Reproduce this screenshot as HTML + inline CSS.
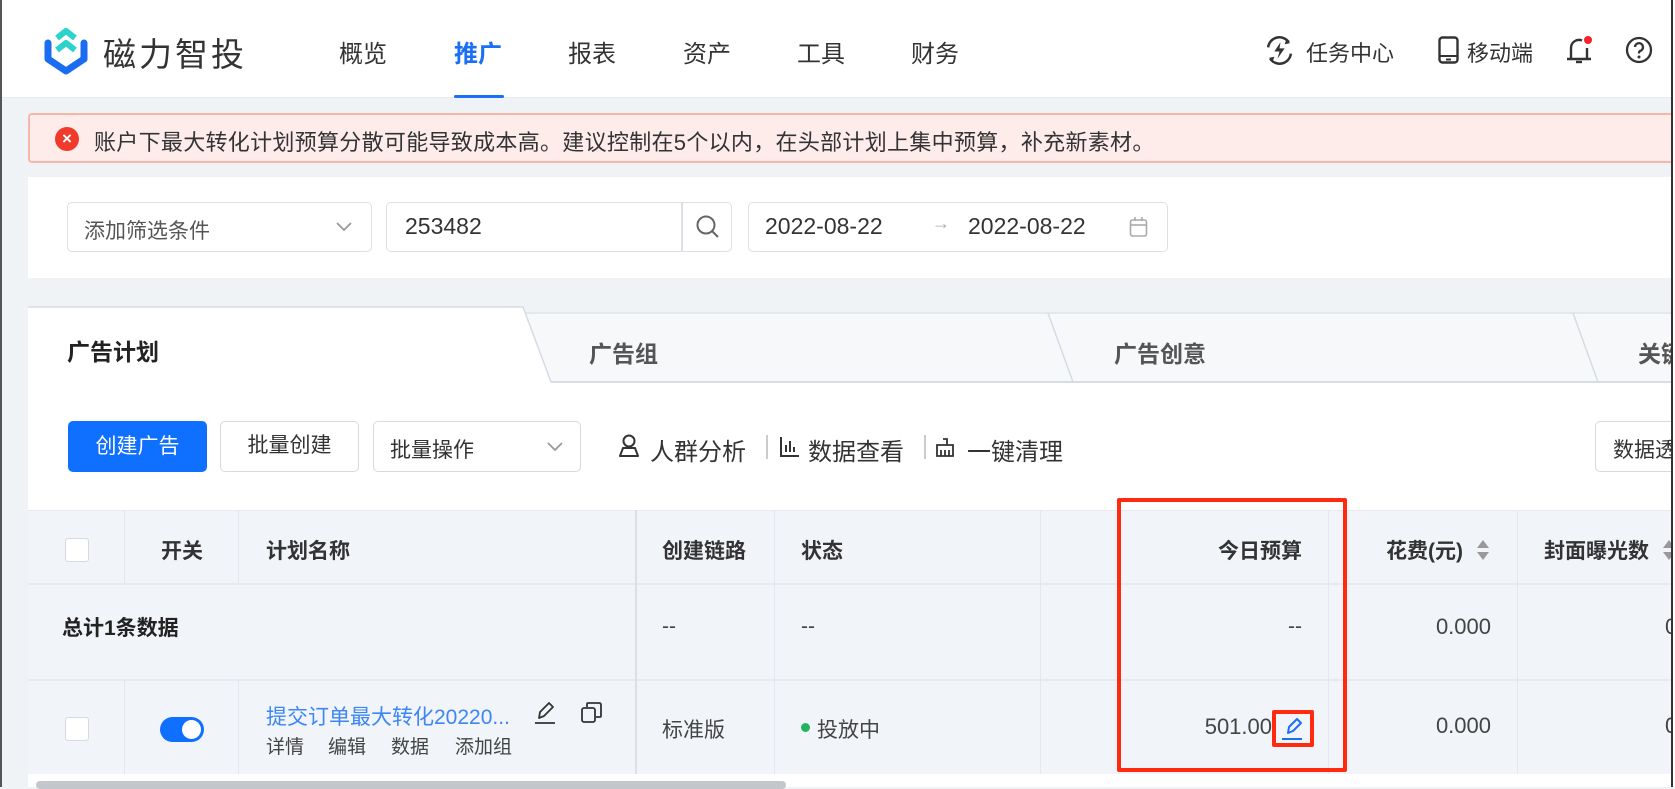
<!DOCTYPE html>
<html><head><meta charset="utf-8"><style>
*{margin:0;padding:0;box-sizing:border-box}
body{width:1675px;height:787px;overflow:hidden;background:#f0f3f6;font-family:"Liberation Sans","Noto Sans CJK SC",sans-serif;color:#333;position:relative}
.a{position:absolute;white-space:nowrap}
.nav{font-size:24px;color:#333;top:34px}
.hd{font-size:21px;color:#333;font-weight:bold}
.td{font-size:21px;color:#444}
.vl{position:absolute;width:1px;background:#e4e8ee}
</style></head><body>
<div class="a" style="left:0;top:0;width:1675px;height:98px;background:#fff;border-bottom:1px solid #e8ebf0"></div>
<svg class="a" style="left:40px;top:26px" width="52" height="50" viewBox="0 0 52 50">
<path d="M8 17 L8 33 L26 45 L44 33 L44 17" fill="none" stroke="#1a6cf0" stroke-width="7" stroke-linejoin="round" stroke-linecap="round"/>
<path d="M17 12 L26 5 L35 12" fill="none" stroke="#2cd3c9" stroke-width="6" stroke-linejoin="round"/>
<path d="M17 24 L26 17 L35 24" fill="none" stroke="#2cd3c9" stroke-width="6" stroke-linejoin="round"/>
</svg>
<div class="a" style="left:103px;top:28px;font-size:33px;color:#333;letter-spacing:3px">磁力智投</div>
<div class="a nav" style="left:339px">概览</div>
<div class="a nav" style="left:454px;color:#1a6ff5;font-weight:bold">推广</div>
<div class="a" style="left:454px;top:95px;width:50px;height:3px;background:#1a6ff5;border-radius:2px"></div>
<div class="a nav" style="left:568px">报表</div>
<div class="a nav" style="left:683px">资产</div>
<div class="a nav" style="left:797px">工具</div>
<div class="a nav" style="left:911px">财务</div>
<svg class="a" style="left:1264px;top:35px" width="31" height="31" viewBox="0 0 30 30"><path d="M4 12 A11 11 0 0 1 24 7 M26 18 A11 11 0 0 1 6 23" fill="none" stroke="#333" stroke-width="2.4"/><path d="M22 3 L25 8 L20 9Z M8 27 L5 22 L10 21Z" fill="#333"/><path d="M16 7 L10 16 L15 16 L13 23 L20 13 L15 13 Z" fill="#333"/></svg>
<div class="a" style="left:1306px;top:36px;font-size:22px;color:#333">任务中心</div>
<svg class="a" style="left:1438px;top:36px" width="21" height="28" viewBox="0 0 21 28"><rect x="1.5" y="1.5" width="18" height="25" rx="3" fill="none" stroke="#333" stroke-width="2.4"/><line x1="2" y1="20" x2="19" y2="20" stroke="#333" stroke-width="2"/><line x1="8" y1="23.5" x2="13" y2="23.5" stroke="#333" stroke-width="2"/></svg>
<div class="a" style="left:1467px;top:36px;font-size:22px;color:#333">移动端</div>
<svg class="a" style="left:1564px;top:34px" width="30" height="30" viewBox="0 0 30 30"><path d="M7 24 L7 14 A8 8 0 0 1 18 6.5 M23 14 L23 24 M3 25 L27 25" fill="none" stroke="#333" stroke-width="2.4"/><path d="M12 28 L18 28" stroke="#333" stroke-width="2.4"/><circle cx="24" cy="6" r="4" fill="#f5222d"/></svg>
<svg class="a" style="left:1625px;top:36px" width="28" height="28" viewBox="0 0 28 28"><circle cx="14" cy="14" r="12" fill="none" stroke="#333" stroke-width="2.3"/><path d="M10 11 A4 4 0 1 1 15 15 Q14 15.5 14 17.5" fill="none" stroke="#333" stroke-width="2.3"/><circle cx="14" cy="21" r="1.5" fill="#333"/></svg>
<div class="a" style="left:28px;top:113px;width:1647px;height:50px;background:#fdecea;border:2px solid #f8b6a8;border-radius:4px"></div>
<div class="a" style="left:55px;top:127px;width:24px;height:24px;border-radius:50%;background:#f03a2c;color:#fff;font-size:17px;font-weight:bold;text-align:center;line-height:24px">×</div>
<div class="a" style="left:94px;top:125px;font-size:22px;color:#333;letter-spacing:0.3px">账户下最大转化计划预算分散可能导致成本高。建议控制在5个以内，在头部计划上集中预算，补充新素材。</div>
<div class="a" style="left:28px;top:177px;width:1647px;height:101px;background:#fff"></div>
<div class="a" style="left:67px;top:202px;width:305px;height:50px;border:1.5px solid #dcdfe6;border-radius:5px"></div>
<div class="a" style="left:84px;top:215px;font-size:21px;color:#555">添加筛选条件</div>
<svg class="a" style="left:336px;top:222px" width="16" height="10"><path d="M1 1 L8 8 L15 1" fill="none" stroke="#999" stroke-width="1.8"/></svg>
<div class="a" style="left:386px;top:202px;width:346px;height:50px;border:1.5px solid #dcdfe6;border-radius:5px"></div>
<div class="a" style="left:681px;top:203px;width:1.5px;height:48px;background:#dcdfe6"></div>
<div class="a" style="left:405px;top:213px;font-size:23px;color:#333">253482</div>
<svg class="a" style="left:695px;top:214px" width="26" height="26" viewBox="0 0 26 26"><circle cx="11" cy="11" r="8.5" fill="none" stroke="#666" stroke-width="2"/><line x1="17" y1="17" x2="23" y2="23" stroke="#666" stroke-width="2"/></svg>
<div class="a" style="left:748px;top:202px;width:420px;height:50px;border:1.5px solid #dcdfe6;border-radius:5px"></div>
<div class="a" style="left:765px;top:213px;font-size:23px;color:#333">2022-08-22</div>
<div class="a" style="left:932px;top:213px;font-size:18px;color:#aaa">→</div>
<div class="a" style="left:968px;top:213px;font-size:23px;color:#333">2022-08-22</div>
<svg class="a" style="left:1129px;top:216px" width="19" height="22" viewBox="0 0 19 22"><rect x="1.5" y="4" width="16" height="16" rx="2" fill="none" stroke="#aaa" stroke-width="1.6"/><line x1="1.5" y1="9" x2="17.5" y2="9" stroke="#aaa" stroke-width="1.6"/><line x1="6" y1="1" x2="6" y2="5" stroke="#aaa" stroke-width="1.6"/><line x1="13" y1="1" x2="13" y2="5" stroke="#aaa" stroke-width="1.6"/></svg>
<svg class="a" style="left:28px;top:305px" width="1647" height="80">
<polygon points="0,8 1647,8 1647,77 0,77" fill="#f7f8fa"/>
<line x1="0" y1="8" x2="1647" y2="8" stroke="#dfe3ea" stroke-width="1.5"/>
<line x1="0" y1="77" x2="1647" y2="77" stroke="#d6dbe4" stroke-width="2"/>
<line x1="1020" y1="8" x2="1045" y2="77" stroke="#d6dbe4" stroke-width="1.5"/>
<line x1="1545" y1="8" x2="1570" y2="77" stroke="#d6dbe4" stroke-width="1.5"/>
<polygon points="0,2 495,2 523,78 0,78" fill="#fff"/>
<polyline points="0,2 495,2 523,77 1647,77" fill="none" stroke="#d6dbe4" stroke-width="1.5"/>
</svg>
<div class="a" style="left:0;top:382px;width:28px;height:2px;background:#f0f3f6"></div>
<div class="a" style="left:28px;top:383px;width:1647px;height:127px;background:#fff"></div>
<div class="a" style="left:67px;top:333px;font-size:23px;color:#222;font-weight:bold">广告计划</div>
<div class="a" style="left:589px;top:335px;font-size:23px;color:#555;font-weight:bold">广告组</div>
<div class="a" style="left:1114px;top:335px;font-size:23px;color:#555;font-weight:bold">广告创意</div>
<div class="a" style="left:1638px;top:335px;font-size:23px;color:#555;font-weight:bold">关键</div>
<div class="a" style="left:68px;top:421px;width:139px;height:51px;background:#0f6fff;border-radius:5px;color:#fff;font-size:21px;text-align:center;line-height:51px">创建广告</div>
<div class="a" style="left:220px;top:421px;width:139px;height:51px;border:1.5px solid #d6d9df;border-radius:5px;color:#333;font-size:21px;text-align:center;line-height:48px">批量创建</div>
<div class="a" style="left:373px;top:421px;width:208px;height:51px;border:1.5px solid #d6d9df;border-radius:5px"></div>
<div class="a" style="left:390px;top:434px;font-size:21px;color:#333">批量操作</div>
<svg class="a" style="left:547px;top:442px" width="16" height="10"><path d="M1 1 L8 8 L15 1" fill="none" stroke="#999" stroke-width="1.8"/></svg>
<svg class="a" style="left:618px;top:433px" width="22" height="26" viewBox="0 0 22 26"><circle cx="11" cy="8" r="5.5" fill="none" stroke="#333" stroke-width="2"/><path d="M2 23 L5 15 L17 15 L20 23 Z" fill="none" stroke="#333" stroke-width="2" stroke-linejoin="round"/></svg>
<div class="a" style="left:650px;top:432px;font-size:24px;color:#333">人群分析</div>
<div class="a" style="left:766px;top:435px;width:1.5px;height:24px;background:#ccc"></div>
<svg class="a" style="left:780px;top:436px" width="20" height="22" viewBox="0 0 20 22"><path d="M1 1 L1 20 L19 20 M6 16 L6 9 M10 16 L10 5 M14 16 L14 11" fill="none" stroke="#333" stroke-width="2"/></svg>
<div class="a" style="left:808px;top:432px;font-size:24px;color:#333">数据查看</div>
<div class="a" style="left:924px;top:435px;width:1.5px;height:24px;background:#ccc"></div>
<svg class="a" style="left:936px;top:438px" width="18" height="20" viewBox="0 0 18 20"><path d="M7 1 L11 1 L11 7 M1 7 L17 7 L17 18 L1 18 Z M5 12 L5 18 M9 12 L9 18 M13 12 L13 18" fill="none" stroke="#333" stroke-width="1.8"/></svg>
<div class="a" style="left:967px;top:432px;font-size:24px;color:#333">一键清理</div>
<div class="a" style="left:1595px;top:421px;width:100px;height:51px;border:1.5px solid #d6d9df;border-radius:5px;background:#fff"></div>
<div class="a" style="left:1613px;top:434px;font-size:21px;color:#333">数据透</div>
<div class="a" style="left:28px;top:510px;width:1647px;height:265px;background:#f1f4f8"></div>
<div class="a" style="left:28px;top:510px;width:1647px;height:1px;background:#e6e9ee"></div>
<div class="a" style="left:28px;top:583px;width:1647px;height:1.5px;background:#e6e9ee"></div>
<div class="a" style="left:28px;top:679px;width:1647px;height:1.5px;background:#e6e9ee"></div>
<div class="a" style="left:28px;top:774px;width:1647px;height:13px;background:#fff"></div>
<div class="vl" style="left:124px;top:510px;height:73px"></div>
<div class="vl" style="left:124px;top:679px;height:95px"></div>
<div class="vl" style="left:238px;top:510px;height:73px"></div>
<div class="vl" style="left:238px;top:679px;height:95px"></div>
<div class="a" style="left:635px;top:510px;width:2px;height:264px;background:#dcdfe4"></div>
<div class="vl" style="left:774px;top:510px;height:264px"></div>
<div class="vl" style="left:1040px;top:510px;height:264px"></div>
<div class="vl" style="left:1328px;top:510px;height:264px"></div>
<div class="vl" style="left:1517px;top:510px;height:264px"></div>
<div class="a" style="left:65px;top:538px;width:24px;height:24px;background:#fff;border:1.5px solid #d6d9df;border-radius:3px"></div>
<div class="a hd" style="left:161px;top:535px">开关</div>
<div class="a hd" style="left:266px;top:535px">计划名称</div>
<div class="a hd" style="left:662px;top:535px">创建链路</div>
<div class="a hd" style="left:801px;top:535px">状态</div>
<div class="a hd" style="left:1302px;top:535px;transform:translateX(-100%)">今日预算</div>
<div class="a hd" style="left:1386px;top:535px">花费(元)</div>
<svg class="a" style="left:1476px;top:539px" width="14" height="22"><path d="M7 1 L13 9 L1 9Z M1 13 L13 13 L7 21Z" fill="#999"/></svg>
<div class="a hd" style="left:1544px;top:535px">封面曝光数</div>
<svg class="a" style="left:1662px;top:539px" width="14" height="22"><path d="M7 1 L13 9 L1 9Z M1 13 L13 13 L7 21Z" fill="#999"/></svg>
<div class="a hd" style="left:62px;top:612px;color:#222">总计1条数据</div>
<div class="a td" style="left:662px;top:615px">--</div>
<div class="a td" style="left:801px;top:615px">--</div>
<div class="a td" style="left:1302px;top:615px;transform:translateX(-100%)">--</div>
<div class="a td" style="left:1491px;top:614px;transform:translateX(-100%);font-size:22px">0.000</div>
<div class="a td" style="left:1665px;top:614px;font-size:22px">0</div>
<div class="a" style="left:65px;top:717px;width:24px;height:24px;background:#fff;border:1.5px solid #d6d9df;border-radius:3px"></div>
<div class="a" style="left:160px;top:717px;width:44px;height:25px;border-radius:13px;background:#0f6fff"></div>
<div class="a" style="left:182px;top:720px;width:19px;height:19px;border-radius:50%;background:#fff"></div>
<div class="a" style="left:266px;top:701px;font-size:21px;color:#3d86f5">提交订单最大转化20220...</div>
<svg class="a" style="left:533px;top:700px" width="24" height="26" viewBox="0 0 24 26"><path d="M6 18 L7 12 L16 3 L20 7 L11 16 Z" fill="none" stroke="#333" stroke-width="1.8" stroke-linejoin="round"/><line x1="2" y1="23" x2="22" y2="23" stroke="#333" stroke-width="1.8"/></svg>
<svg class="a" style="left:580px;top:701px" width="23" height="23" viewBox="0 0 23 23"><rect x="2" y="7" width="13" height="14" rx="2" fill="none" stroke="#333" stroke-width="1.8"/><path d="M7 6 L7 3 Q7 2 8 2 L19 2 Q21 2 21 4 L21 15 Q21 16 20 16 L16 16" fill="none" stroke="#333" stroke-width="1.8"/></svg>
<div class="a" style="left:266px;top:732px;font-size:19px;color:#444">详情</div>
<div class="a" style="left:328px;top:732px;font-size:19px;color:#444">编辑</div>
<div class="a" style="left:391px;top:732px;font-size:19px;color:#444">数据</div>
<div class="a" style="left:455px;top:732px;font-size:19px;color:#444">添加组</div>
<div class="a td" style="left:662px;top:714px">标准版</div>
<div class="a" style="left:801px;top:723px;width:9px;height:9px;border-radius:50%;background:#22b35e"></div>
<div class="a td" style="left:817px;top:714px">投放中</div>
<div class="a td" style="left:1272px;top:714px;transform:translateX(-100%);font-size:22px">501.00</div>
<svg class="a" style="left:1280px;top:715px" width="26" height="28" viewBox="0 0 26 28"><path d="M8 18 L9 12 L17 4 L21 8 L13 16 Z" fill="none" stroke="#1a6ff5" stroke-width="2" stroke-linejoin="round"/><line x1="2" y1="24" x2="22" y2="24" stroke="#1a6ff5" stroke-width="2"/></svg>
<div class="a" style="left:1272px;top:710px;width:42px;height:37px;border:4px solid #ff2a10;border-radius:2px"></div>
<div class="a td" style="left:1491px;top:713px;transform:translateX(-100%);font-size:22px">0.000</div>
<div class="a td" style="left:1665px;top:713px;font-size:22px">0</div>
<div class="a" style="left:1117px;top:498px;width:230px;height:274px;border:4px solid #ff2a10;border-radius:2px"></div>
<div class="a" style="left:36px;top:781px;width:750px;height:8px;border-radius:4px;background:#c3c6cb"></div>
<div class="a" style="left:0;top:0;width:2px;height:787px;background:#555"></div>
<div class="a" style="left:1671px;top:0;width:4px;height:787px;background:#fff;border-left:2px solid #333"></div>
</body></html>
